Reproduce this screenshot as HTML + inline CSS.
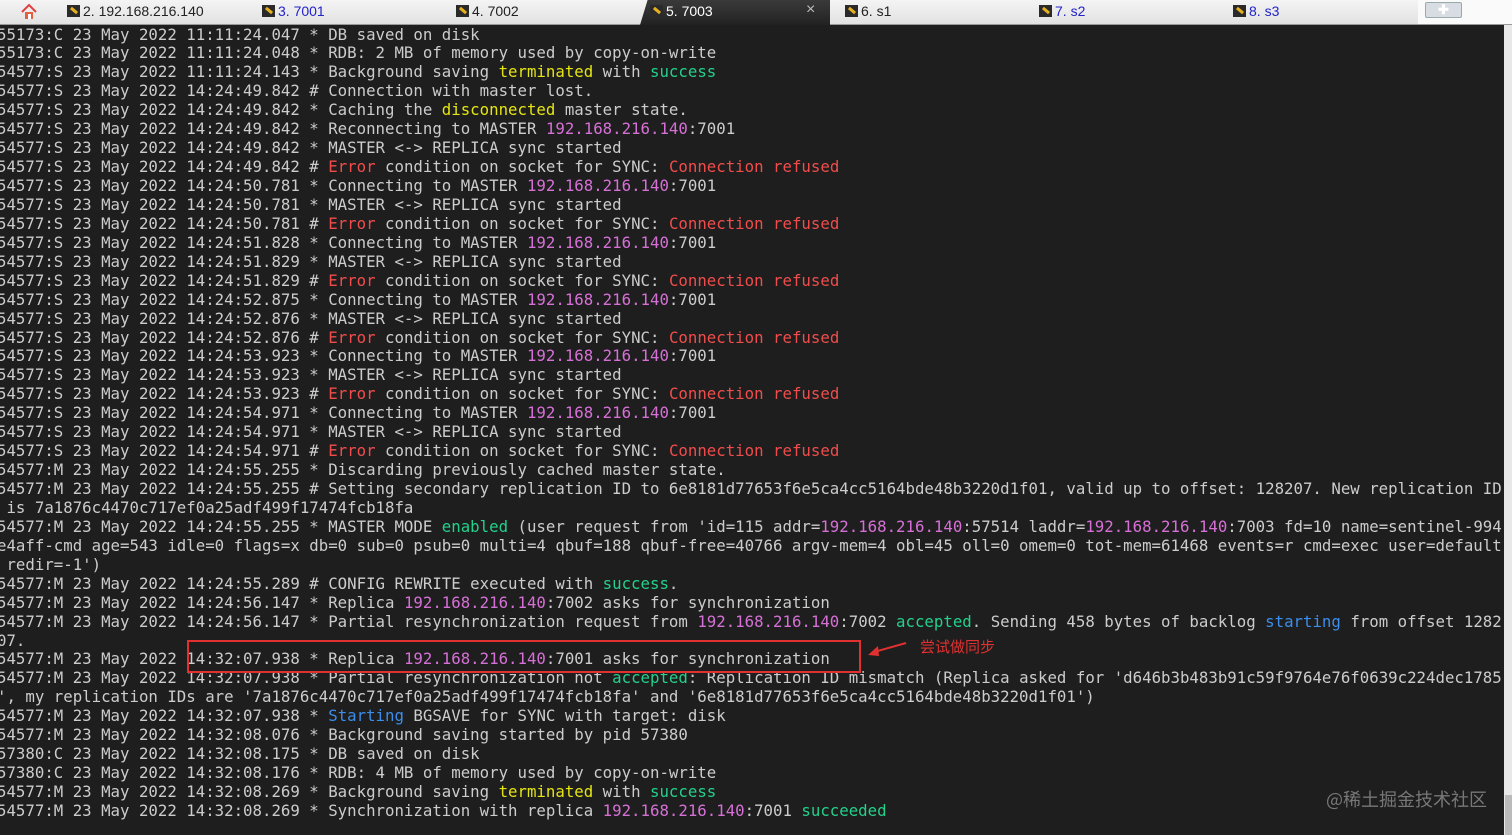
<!DOCTYPE html><html><head><meta charset="utf-8"><style>
body{margin:0;width:1512px;height:835px;overflow:hidden;background:#1e1e1e;position:relative;font-family:"DejaVu Sans Mono","Liberation Mono",monospace}
#tabs{position:absolute;left:0;top:0;width:1512px;height:24px;background:linear-gradient(#f4f4f4,#e2e2e2);border-bottom:1px solid #999}
.tab{position:absolute;top:3px;font:14px "Liberation Sans",sans-serif;color:#222}
.tab i{display:inline-block;width:13px;height:12px;background:#2a2a2a;vertical-align:-1px;margin-right:3px;position:relative}
.tab i:after{content:"";position:absolute;left:3px;top:4px;width:8px;height:3px;background:#e8b020;transform:rotate(40deg)}
.b{color:#2222cc}
#act{position:absolute;left:640px;top:0;width:190px;height:25px;background:linear-gradient(#3a3a3a,#222);clip-path:polygon(4% 0,100% 0,100% 100%,0 100%)}
#term{position:absolute;left:-3px;top:25.5px;font-size:15.72px;line-height:18.93px;color:#cccccc;white-space:pre}
.y{color:#e5e510}.g{color:#23d18b}.m{color:#d670d6}.r{color:#f14c4c}.c{color:#3b8eea}
#sb{position:absolute;left:1504px;top:25px;width:8px;height:810px;background:#e8e8e8}
#sb:after{content:"";position:absolute;left:1px;top:770px;width:7px;height:40px;background:#bbb}
</style></head><body>
<div id="tabs">
<svg style="position:absolute;left:20px;top:3px" width="18" height="18"><path d="M2 9 L9 2 L16 9" fill="none" stroke="#e04040" stroke-width="2"/><rect x="5" y="9" width="8" height="7" fill="#e06040"/><rect x="8" y="11" width="3" height="5" fill="#fff"/></svg>
<div class="tab" style="left:67px"><i></i>2. 192.168.216.140</div>
<div class="tab b" style="left:262px"><i></i>3. 7001</div>
<div class="tab" style="left:456px"><i></i>4. 7002</div>
<div id="act"></div>
<div class="tab" style="left:650px;color:#fff"><i></i>5. 7003</div>
<div class="tab" style="left:806px;color:#bbb;top:1px;font-size:16px">×</div>
<div class="tab" style="left:845px"><i></i>6. s1</div>
<div class="tab b" style="left:1039px"><i></i>7. s2</div>
<div class="tab b" style="left:1233px"><i></i>8. s3</div>
<div style="position:absolute;left:1418px;top:0;width:94px;height:24px;background:#fafafa"></div>
<div style="position:absolute;left:1425px;top:2px;width:35px;height:14px;background:#d8dde4;border:1px solid #9aa;border-radius:2px;color:#fff;font:bold 13px sans-serif;text-align:center;line-height:14px">✚</div>
</div>
<div id="term">55173:C 23 May 2022 11:11:24.047 * DB saved on disk
55173:C 23 May 2022 11:11:24.048 * RDB: 2 MB of memory used by copy-on-write
54577:S 23 May 2022 11:11:24.143 * Background saving <span class="y">terminated</span> with <span class="g">success</span>
54577:S 23 May 2022 14:24:49.842 # Connection with master lost.
54577:S 23 May 2022 14:24:49.842 * Caching the <span class="y">disconnected</span> master state.
54577:S 23 May 2022 14:24:49.842 * Reconnecting to MASTER <span class="m">192.168.216.140</span>:7001
54577:S 23 May 2022 14:24:49.842 * MASTER &lt;-&gt; REPLICA sync started
54577:S 23 May 2022 14:24:49.842 # <span class="r">Error</span> condition on socket for SYNC: <span class="r">Connection refused</span>
54577:S 23 May 2022 14:24:50.781 * Connecting to MASTER <span class="m">192.168.216.140</span>:7001
54577:S 23 May 2022 14:24:50.781 * MASTER &lt;-&gt; REPLICA sync started
54577:S 23 May 2022 14:24:50.781 # <span class="r">Error</span> condition on socket for SYNC: <span class="r">Connection refused</span>
54577:S 23 May 2022 14:24:51.828 * Connecting to MASTER <span class="m">192.168.216.140</span>:7001
54577:S 23 May 2022 14:24:51.829 * MASTER &lt;-&gt; REPLICA sync started
54577:S 23 May 2022 14:24:51.829 # <span class="r">Error</span> condition on socket for SYNC: <span class="r">Connection refused</span>
54577:S 23 May 2022 14:24:52.875 * Connecting to MASTER <span class="m">192.168.216.140</span>:7001
54577:S 23 May 2022 14:24:52.876 * MASTER &lt;-&gt; REPLICA sync started
54577:S 23 May 2022 14:24:52.876 # <span class="r">Error</span> condition on socket for SYNC: <span class="r">Connection refused</span>
54577:S 23 May 2022 14:24:53.923 * Connecting to MASTER <span class="m">192.168.216.140</span>:7001
54577:S 23 May 2022 14:24:53.923 * MASTER &lt;-&gt; REPLICA sync started
54577:S 23 May 2022 14:24:53.923 # <span class="r">Error</span> condition on socket for SYNC: <span class="r">Connection refused</span>
54577:S 23 May 2022 14:24:54.971 * Connecting to MASTER <span class="m">192.168.216.140</span>:7001
54577:S 23 May 2022 14:24:54.971 * MASTER &lt;-&gt; REPLICA sync started
54577:S 23 May 2022 14:24:54.971 # <span class="r">Error</span> condition on socket for SYNC: <span class="r">Connection refused</span>
54577:M 23 May 2022 14:24:55.255 * Discarding previously cached master state.
54577:M 23 May 2022 14:24:55.255 # Setting secondary replication ID to 6e8181d77653f6e5ca4cc5164bde48b3220d1f01, valid up to offset: 128207. New replication ID
 is 7a1876c4470c717ef0a25adf499f17474fcb18fa
54577:M 23 May 2022 14:24:55.255 * MASTER MODE <span class="g">enabled</span> (user request from 'id=115 addr=<span class="m">192.168.216.140</span>:57514 laddr=<span class="m">192.168.216.140</span>:7003 fd=10 name=sentinel-994
e4aff-cmd age=543 idle=0 flags=x db=0 sub=0 psub=0 multi=4 qbuf=188 qbuf-free=40766 argv-mem=4 obl=45 oll=0 omem=0 tot-mem=61468 events=r cmd=exec user=default
 redir=-1')
54577:M 23 May 2022 14:24:55.289 # CONFIG REWRITE executed with <span class="g">success</span>.
54577:M 23 May 2022 14:24:56.147 * Replica <span class="m">192.168.216.140</span>:7002 asks for synchronization
54577:M 23 May 2022 14:24:56.147 * Partial resynchronization request from <span class="m">192.168.216.140</span>:7002 <span class="g">accepted</span>. Sending 458 bytes of backlog <span class="c">starting</span> from offset 1282
07.
54577:M 23 May 2022 14:32:07.938 * Replica <span class="m">192.168.216.140</span>:7001 asks for synchronization
54577:M 23 May 2022 14:32:07.938 * Partial resynchronization not <span class="g">accepted</span>: Replication ID mismatch (Replica asked for 'd646b3b483b91c59f9764e76f0639c224dec1785
', my replication IDs are '7a1876c4470c717ef0a25adf499f17474fcb18fa' and '6e8181d77653f6e5ca4cc5164bde48b3220d1f01')
54577:M 23 May 2022 14:32:07.938 * <span class="c">Starting</span> BGSAVE for SYNC with target: disk
54577:M 23 May 2022 14:32:08.076 * Background saving started by pid 57380
57380:C 23 May 2022 14:32:08.175 * DB saved on disk
57380:C 23 May 2022 14:32:08.176 * RDB: 4 MB of memory used by copy-on-write
54577:M 23 May 2022 14:32:08.269 * Background saving <span class="y">terminated</span> with <span class="g">success</span>
54577:M 23 May 2022 14:32:08.269 * Synchronization with replica <span class="m">192.168.216.140</span>:7001 <span class="g">succeeded</span></div>
<div style="position:absolute;left:187px;top:640px;width:670px;height:29px;border:2px solid #e03030"></div>
<svg style="position:absolute;left:864px;top:640px" width="44" height="20"><path d="M42 3 L10 12" stroke="#e03030" stroke-width="2"/><path d="M4 15 L14 6 L15 16 Z" fill="#e03030"/></svg>
<div style="position:absolute;left:920px;top:636px;color:#e03030;font:15px 'Noto Sans CJK SC',sans-serif">尝试做同步</div>
<div style="position:absolute;left:1326px;top:786px;color:#777;font:18px 'Noto Sans CJK SC',sans-serif">@稀土掘金技术社区</div>
<div id="sb"></div>
</body></html>
